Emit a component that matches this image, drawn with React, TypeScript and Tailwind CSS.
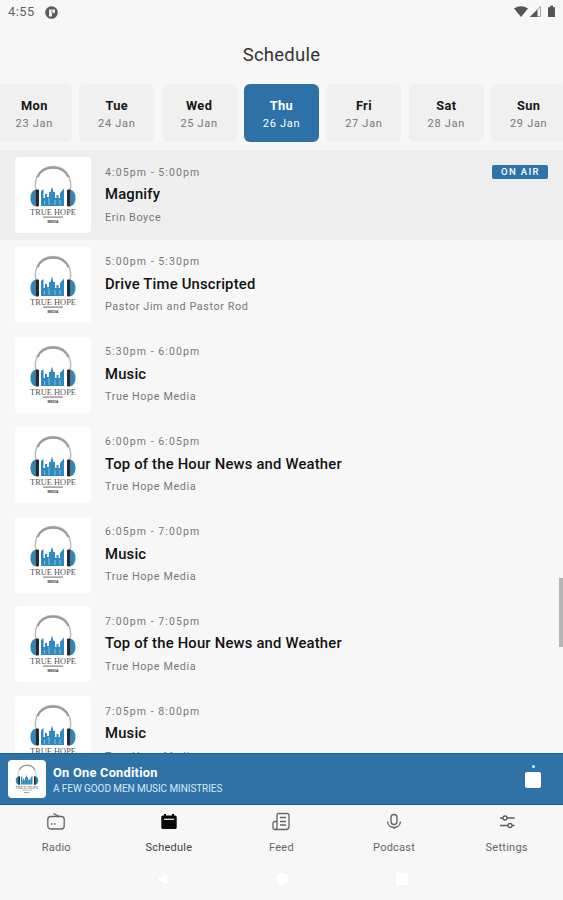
interface Day {
  name: string;
  date: string;
  active?: boolean;
}

interface Show {
  time: string;
  title: string;
  host: string;
  onAir?: boolean;
}

const days: Day[] = [
  { name: "Mon", date: "23 Jan" },
  { name: "Tue", date: "24 Jan" },
  { name: "Wed", date: "25 Jan" },
  { name: "Thu", date: "26 Jan", active: true },
  { name: "Fri", date: "27 Jan" },
  { name: "Sat", date: "28 Jan" },
  { name: "Sun", date: "29 Jan" },
];

const shows: Show[] = [
  { time: "4:05pm - 5:00pm", title: "Magnify", host: "Erin Boyce", onAir: true },
  { time: "5:00pm - 5:30pm", title: "Drive Time Unscripted", host: "Pastor Jim and Pastor Rod" },
  { time: "5:30pm - 6:00pm", title: "Music", host: "True Hope Media" },
  { time: "6:00pm - 6:05pm", title: "Top of the Hour News and Weather", host: "True Hope Media" },
  { time: "6:05pm - 7:00pm", title: "Music", host: "True Hope Media" },
  { time: "7:00pm - 7:05pm", title: "Top of the Hour News and Weather", host: "True Hope Media" },
  { time: "7:05pm - 8:00pm", title: "Music", host: "True Hope Media" },
];

const Logo = ({ className }: { className: string }) => (
  <svg viewBox="0 0 76 76" className={className}>
    <path d="M22 34 C18 30 20 10 38 9.500 C56 10 58 30 54 34" fill="none" stroke="#b9b9b9" strokeWidth="1.500" />
    <path d="M22.500 20 C28 7.500 48 7.500 53.500 20" fill="none" stroke="#9a9a9a" strokeWidth="2.400" />
    <path d="M20 33 C14 34 14 48 20 49 Z M56 33 C62 34 62 48 56 49 Z" fill="#2c87bd" />
    <rect x="20.300" y="32.500" width="3.700" height="17" rx="1" fill="#222b33" />
    <rect x="52" y="32.500" width="3.700" height="17" rx="1" fill="#222b33" />
    <path d="M26 49 V34 L28.500 32 V41 H30 V37 H32 V40 H34 V35 H35.500 L37 29.500 L38.500 35 H40 V41 H41.500 V38 H43.500 V41 H45 V36 L49 31.500 V49 Z" fill="#318abf" />
    <path d="M29.500 44 V48 M34 41 V48 M40 43 V48 M45 43 V48" stroke="#c4e1f0" strokeWidth=".6" />
    <text x="38" y="57.500" textAnchor="middle" textLength="46" lengthAdjust="spacingAndGlyphs" fontSize="8.500" fontFamily="Liberation Serif, serif" fill="#555">TRUE HOPE</text>
    <path d="M28 60.200 H48" stroke="#888" strokeWidth="1.200" />
    <text x="38" y="65.500" textAnchor="middle" textLength="11" lengthAdjust="spacingAndGlyphs" fontSize="3.600" fontWeight="700" fontFamily="Liberation Sans, sans-serif" fill="#333">MEDIA</text>
  </svg>
);

const StatusBar = () => (
  <div className="flex h-6 shrink-0 items-center justify-between pl-2 pr-[7px] text-[#626262]">
    <div className="flex items-center gap-[10px]">
      <span className="text-[12.800px] tracking-[0.500px]">4:55</span>
      <svg width="13" height="13" viewBox="0 0 13 13">
        <circle cx="6.500" cy="6.500" r="6.300" fill="#5c5c5c" />
        <path d="M4 10.500 V3.500 H10 V7 H7 V10.500 Z" fill="#f0f0f0" />
        <path d="M6.800 3.500 V7 H10" fill="none" stroke="#8a8a8a" strokeWidth=".8" />
      </svg>
    </div>
    <svg width="43" height="14" viewBox="0 0 43 14">
      <path d="M1 3.500 Q8 -.8 15 3.500 L8 12 Z" fill="#555" />
      <path d="M27.500 1.500 V11.500 H17.500 Z" fill="#f7f7f7" stroke="#999" strokeWidth=".9" />
      <path d="M24.500 4.500 V12 H17 Z" fill="#555" />
      <path d="M35 2.200 H37 V.8 H40 V2.200 H42 V12 H35 Z" fill="#555" />
    </svg>
  </div>
);

const ShowRow = ({ show }: { show: Show }) => (
  <div className={`flex h-[89.900px] shrink-0 items-start px-[15px] pt-[7px] ${show.onAir ? "bg-[#efefef]" : ""}`}>
    <Logo className="size-[76px] shrink-0 rounded-[4px] bg-white" />
    <div className="ml-[14px] flex-1 pt-[7.500px]">
      <p className="text-[10.500px] leading-[16px] tracking-[1.100px] text-[#777]">{show.time}</p>
      <h2 className="mt-[4.500px] text-[14.800px] font-medium leading-[19px] tracking-[0.200px] text-[#111]">{show.title}</h2>
      <p className="mt-[5.500px] text-[10.800px] leading-[16px] tracking-[0.600px] text-[#777]">{show.host}</p>
    </div>
    {show.onAir && (
      <span className="mt-[8px] flex h-[14px] w-[56px] items-center justify-center rounded-[2px] bg-[#2d73a8] pl-px text-[9.500px] font-medium tracking-[1.400px] text-white">
        ON AIR
      </span>
    )}
  </div>
);

const Player = () => (
  <div className="flex h-[52px] shrink-0 items-center border-y border-[#17629a] bg-[#2e72a8] pl-2 pr-[22px] text-white">
    <Logo className="size-[38px] rounded-[4px] bg-white" />
    <div className="ml-[7px] flex-1 pt-[2px]">
      <p className="text-[12.800px] font-bold leading-[17px] tracking-[0.250px]">On One Condition</p>
      <p className="text-[10px] leading-[16px] tracking-[-0.080px] text-[#d9e8f3]">A FEW GOOD MEN MUSIC MINISTRIES</p>
    </div>
    <div className="flex flex-col items-center gap-[4px] pb-[6px]">
      <span className="size-[3px] rounded-full bg-[#d4f2ff]" />
      <span className="size-4 rounded-[2px] bg-white" />
    </div>
  </div>
);

const RadioIcon = () => (
  <svg width="20" height="20" viewBox="0 0 20 20" fill="none" stroke="#666" strokeWidth="1.300">
    <rect x="1.800" y="4.500" width="16.400" height="12.500" rx="3" />
    <path d="M7.500 1.700 L13 4.300" />
    <path d="M5 12 H6.500 M8 12 H9.500" />
  </svg>
);

const ScheduleIcon = () => (
  <svg width="20" height="20" viewBox="0 0 20 20">
    <path d="M4 3.500 H5 V2 H7 V3.500 H13 V2 H15 V3.500 H16 Q17.700 3.500 17.700 5 V15.500 Q17.700 17 16 17 H4 Q2.300 17 2.300 15.500 V5 Q2.300 3.500 4 3.500 Z" fill="#050505" />
    <path d="M5 7.300 H15" stroke="#f7f7f7" strokeWidth="1.200" />
  </svg>
);

const FeedIcon = () => (
  <svg width="20" height="20" viewBox="0 0 20 20" fill="none" stroke="#666" strokeWidth="1.300">
    <path d="M6 15.500 V3.500 Q6 1.500 8 1.500 H16 Q18 1.500 18 3.500 V14.500 Q18 17.500 15 17.500 H4 Q2 17.500 2 15.500 V11.500 Q2 9.500 4 9.500 H6" />
    <path d="M6 15.500 Q6 17.500 4 17.500 M9 5.500 H15 M9 9.500 H15 M9 13 H15" />
  </svg>
);

const PodcastIcon = () => (
  <svg width="20" height="20" viewBox="0 0 20 20" fill="none" stroke="#666" strokeWidth="1.400">
    <rect x="7" y="2.500" width="6" height="10" rx="3" />
    <path d="M3.500 9.500 C4 17.300 16 17.300 16.500 9.500 M10 15.300 V17" />
  </svg>
);

const SettingsIcon = () => (
  <svg width="20" height="20" viewBox="0 0 20 20" fill="none" stroke="#5c5c5c" strokeWidth="1.300">
    <circle cx="8" cy="6" r="2" />
    <circle cx="13" cy="13.500" r="2" />
    <path d="M3 6 H6 M10 6 H17.500 M3 13.500 H11 M15 13.500 H17.500" />
  </svg>
);

const tabs = [
  { label: "Radio", icon: <RadioIcon /> },
  { label: "Schedule", icon: <ScheduleIcon />, active: true },
  { label: "Feed", icon: <FeedIcon /> },
  { label: "Podcast", icon: <PodcastIcon /> },
  { label: "Settings", icon: <SettingsIcon /> },
];

const App = () => {
  return (
    <div className="relative flex h-[900px] w-full flex-col overflow-hidden bg-[#f7f7f7] font-['Roboto',sans-serif]">
      <StatusBar />
      <header className="flex h-[60px] shrink-0 items-center justify-center pt-[3px]">
        <h1 className="text-[18.500px] tracking-[0.250px] text-[#333]">Schedule</h1>
      </header>

      <div className="flex h-[66px] shrink-0 justify-center gap-[7.400px]">
        {days.map((day) => (
          <div
            key={day.name}
            className={`flex h-[58px] w-[75px] shrink-0 flex-col items-center rounded-[6px] pt-[13px] ${
              day.active ? "bg-[#2d71a7] text-white" : "bg-[#f0f0f0] text-[#777]"
            }`}
          >
            <span className={`text-[12.800px] font-bold leading-[18px] tracking-[0.350px] ${day.active ? "" : "text-[#161616]"}`}>
              {day.name}
            </span>
            <span className="mt-px text-[11px] leading-[16px] tracking-[0.700px]">{day.date}</span>
          </div>
        ))}
      </div>

      <main className="flex min-h-0 flex-1 flex-col overflow-hidden">
        {shows.map((show) => (
          <ShowRow key={show.time} show={show} />
        ))}
      </main>

      <Player />

      <nav className="flex h-[55px] shrink-0 pt-[7px]">
        {tabs.map((tab) => (
          <div key={tab.label} className="flex flex-1 flex-col items-center">
            {tab.icon}
            <span className={`mt-[8px] text-[11px] leading-[16px] tracking-[0.250px] ${tab.active ? "text-[#444]" : "text-[#666]"}`}>
              {tab.label}
            </span>
          </div>
        ))}
      </nav>

      <div className="flex h-[40px] shrink-0 items-center justify-center pb-[3px]">
        <svg width="260" height="18" viewBox="0 0 260 18" fill="#fff" stroke="#f0f0f0" strokeWidth=".8">
          <path d="M4 9 L16 2 V16 Z" />
          <circle cx="130" cy="9" r="7" />
          <rect x="243" y="2" width="14" height="14" rx="1" />
        </svg>
      </div>

      <div className="absolute right-0 top-[578px] h-[69px] w-[4px] bg-[#b5b5b5]" />
    </div>
  );
};

export default App;
